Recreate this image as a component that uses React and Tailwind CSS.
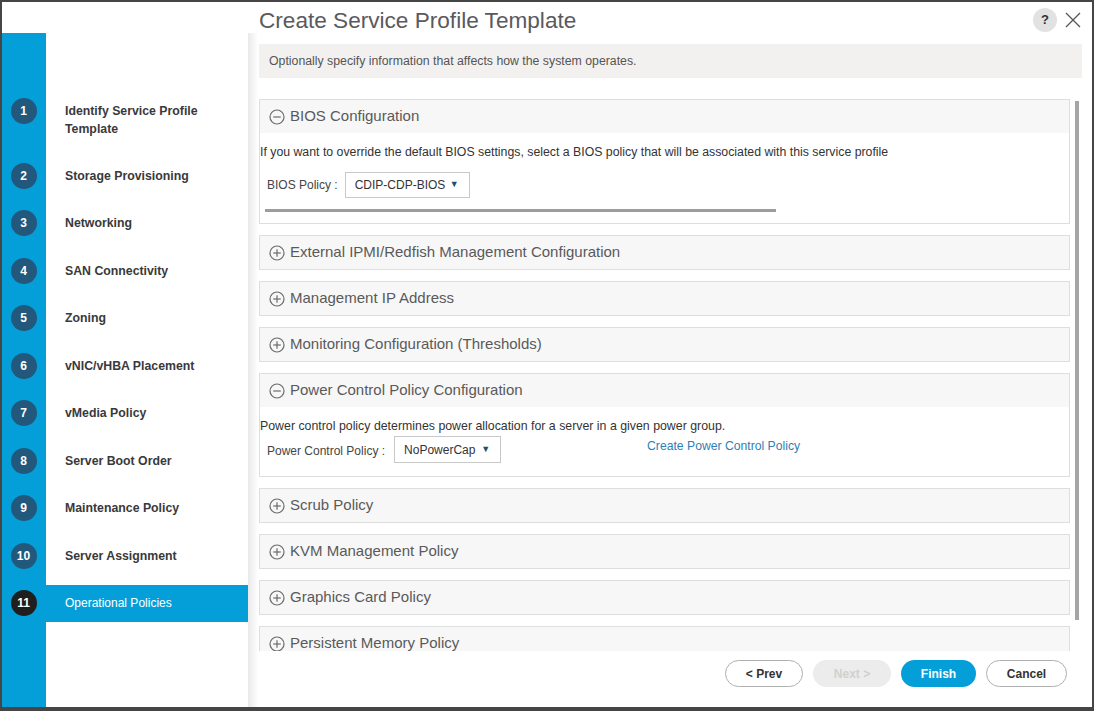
import { useState } from 'react'

const steps = [
  'Identify Service Profile Template',
  'Storage Provisioning',
  'Networking',
  'SAN Connectivity',
  'Zoning',
  'vNIC/vHBA Placement',
  'vMedia Policy',
  'Server Boot Order',
  'Maintenance Policy',
  'Server Assignment',
  'Operational Policies',
]

function ToggleIcon({ open }) {
  return (
    <svg width="16" height="16" viewBox="0 0 16 16" className="shrink-0">
      <circle cx="8" cy="8" r="7" fill="none" stroke="#6b6b6b" strokeWidth="1.2" />
      <line x1="4.2" y1="8" x2="11.8" y2="8" stroke="#6b6b6b" strokeWidth="1.2" />
      {!open && <line x1="8" y1="4.2" x2="8" y2="11.8" stroke="#6b6b6b" strokeWidth="1.2" />}
    </svg>
  )
}

function Select({ value, className }) {
  return (
    <div className={`flex items-center justify-between border border-[#c9c9c9] bg-white pl-[9px] pr-[10px] text-[12px] text-[#333] ${className}`}>
      <span>{value}</span>
      <span className="text-[9px] text-[#1d4f73]">▼</span>
    </div>
  )
}

function Section({ title, open, className = '', children }) {
  return (
    <div className={`shrink-0 border border-[#dedede] ${open ? 'bg-white' : 'bg-[#f7f7f7]'} ${className}`}>
      <div className="flex h-[33px] items-center gap-[5px] bg-[#f7f7f7] pl-[9px] text-[15px] text-[#5a5a5a]">
        <ToggleIcon open={open} />
        <span>{title}</span>
      </div>
      {open && children}
    </div>
  )
}

function App() {
  const [active] = useState(10)

  return (
    <div className="flex h-[711px] w-[1094px] overflow-hidden border-x-2 border-t-2 border-b-4 border-[#454545] bg-white font-['Liberation_Sans',Arial,sans-serif]">
      {/* Wizard steps */}
      <div className="flex w-[246px] shrink-0 flex-col">
        <div className="h-[31px] shrink-0 bg-white" />
        <div className="flex flex-1 flex-col bg-[#049fd9]">
          <div className="ml-[44px] h-[54px] shrink-0 bg-white" />
          {steps.map((s, i) => (
            <div key={s} className={`flex shrink-0 ${i === 0 ? 'h-[65px]' : 'h-[47.5px]'}`}>
              <div className={`flex w-[44px] shrink-0 justify-center pr-[1px] ${i === 0 ? 'items-start pt-[11px]' : 'items-center'}`}>
                <div className={`flex h-[26px] w-[26px] items-center justify-center rounded-full text-[12px] font-bold text-white ${i === active ? 'bg-[#1f1f1f]' : 'bg-[#22587b]'}`}>
                  {i + 1}
                </div>
              </div>
              <div className="flex flex-1 items-center bg-white">
                {i === active ? (
                  <div className="flex h-[37px] w-full items-center bg-[#049fd9] pl-[19px] text-[12px] text-white">{s}</div>
                ) : (
                  <div className="w-[160px] pl-[19px] text-[12.3px] font-bold leading-[18px] text-[#39393b]">{s}</div>
                )}
              </div>
            </div>
          ))}
          <div className="ml-[44px] flex-1 bg-white" />
        </div>
      </div>

      {/* Main panel */}
      <div className="flex flex-1 flex-col">
        <div className="flex h-[31px] shrink-0 items-start pl-[11px] pt-[6px]">
          <h1 className="text-[22.6px] leading-[26px] text-[#5a5a5d]">Create Service Profile Template</h1>
          <div className="ml-auto mr-[10px] flex items-center gap-[7px]">
            <div className="flex h-[24px] w-[24px] items-center justify-center rounded-full bg-[#e2e2e2] text-[13px] font-bold text-[#333]">?</div>
            <svg width="18" height="18" viewBox="0 0 18 18">
              <path d="M2 2 L16 16 M16 2 L2 16" stroke="#555" strokeWidth="1.3" />
            </svg>
          </div>
        </div>

        <div className="flex flex-1 overflow-hidden">
          <div className="w-[10px] shrink-0 bg-gradient-to-r from-[#e9e9e9] to-white" />
          <div className="flex flex-1 flex-col">
            <div className="ml-[1px] mr-[10px] mt-[11px] flex h-[34px] shrink-0 items-center bg-[#f3f1f0] pl-[10px] text-[12.3px] text-[#555]">
              Optionally specify information that affects how the system operates.
            </div>

            <div className="mt-[21px] flex h-[552px] shrink-0">
              <div className="ml-[1px] flex w-[811px] flex-col gap-[11px] overflow-hidden">
                <Section title="BIOS Configuration" open>
                  <div className="pb-[11px] pt-[11px] text-[12px] text-[#333]">
                    <p className="text-[12.3px] leading-[16px]">If you want to override the default BIOS settings, select a BIOS policy that will be associated with this service profile</p>
                    <div className="mt-[12px] flex items-center">
                      <span className="ml-[7px] text-[#444]">BIOS Policy :</span>
                      <Select value="CDIP-CDP-BIOS" className="ml-[7px] h-[26px] w-[125px]" />
                    </div>
                    <div className="ml-[5px] mt-[11px] h-[3px] w-[511px] bg-[#9d9d9d]" />
                  </div>
                </Section>
                <Section title="External IPMI/Redfish Management Configuration" />
                <Section title="Management IP Address" />
                <Section title="Monitoring Configuration (Thresholds)" />
                <Section title="Power Control Policy Configuration" open>
                  <div className="pb-[13px] pt-[11px] text-[12px] text-[#333]">
                    <p className="text-[12.35px] leading-[16px]">Power control policy determines power allocation for a server in a given power group.</p>
                    <div className="mt-[2px] flex items-start">
                      <span className="ml-[7px] mt-[6px] text-[#444]">Power Control Policy :</span>
                      <Select value="NoPowerCap" className="ml-[9px] h-[27px] w-[107px]" />
                      <a className="ml-[146px] mt-[1px] text-[12.2px] text-[#2f7fb5]">Create Power Control Policy</a>
                    </div>
                  </div>
                </Section>
                <Section title="Scrub Policy" />
                <Section title="KVM Management Policy" />
                <Section title="Graphics Card Policy" />
                <Section title="Persistent Memory Policy" />
              </div>
              <div className="ml-[5px] mt-[2px] h-[519px] w-[4px] bg-[#a5a5a5]" />
            </div>

            {/* Footer */}
            <div className="flex flex-1 items-start justify-end gap-[10px] pr-[25px] pt-[9px] text-[12px] font-bold">
              <button className="h-[27px] w-[78px] rounded-full border border-[#b0b0b0] bg-white text-[#333]">&lt; Prev</button>
              <button className="h-[27px] w-[78px] rounded-full bg-[#ececec] text-[#d0d0d0]">Next &gt;</button>
              <button className="h-[27px] w-[75px] rounded-full bg-[#049fd9] text-white">Finish</button>
              <button className="h-[27px] w-[81px] rounded-full border border-[#b0b0b0] bg-white text-[#333]">Cancel</button>
            </div>
          </div>
        </div>
      </div>
    </div>
  )
}

export default App
